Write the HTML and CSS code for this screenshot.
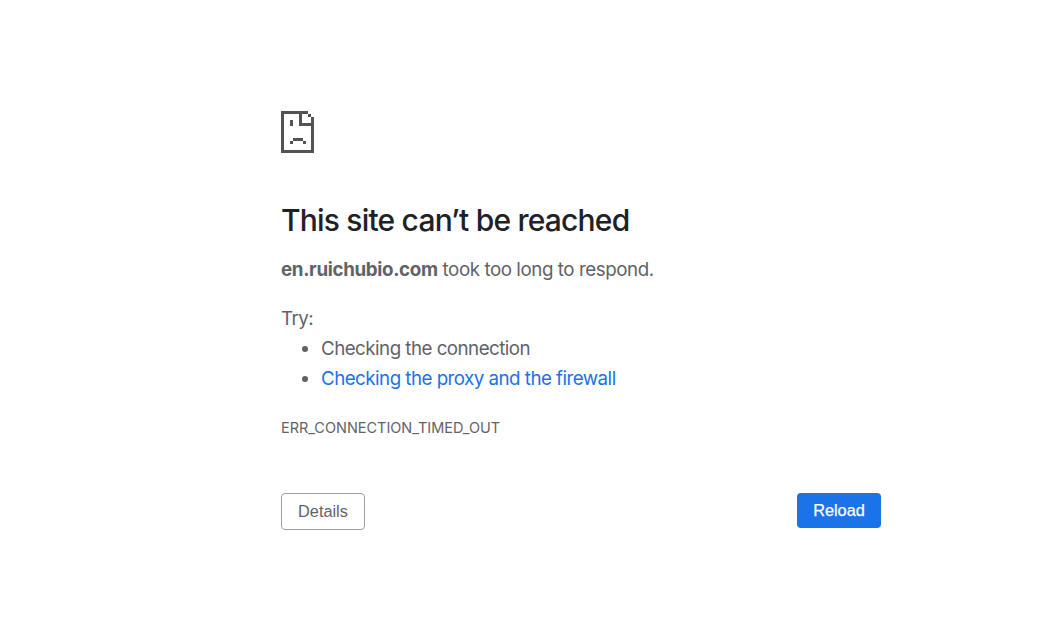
FILE: index.html
```html
<!DOCTYPE html>
<html lang="en">
<head>
  <meta charset="UTF-8" />
  <meta name="viewport" content="width=device-width, initial-scale=1.0"/>
  <title>en.ruichubio.com</title>
  <link rel="stylesheet" href="styles.css">
</head>
<body>
  <div class="container">
    <!-- Sad page icon -->
    <svg class="icon" viewBox="0 0 33 42" shape-rendering="crispEdges" aria-hidden="true">
      <path d="M0 0H27V3H3V39H30V15H18V3H21V12H33V42H0Z M27 3H30V6H27Z M30 6H33V12H30Z M9 9H12V15H9Z M12 27H22V30H12Z M9 30H12V33H9Z M22 30H25V33H22Z"/>
    </svg>

    <h1>This site can’t be reached</h1>
    <p class="summary"><strong>en.ruichubio.com</strong> took too long to respond.</p>

    <div class="suggestions">
      <p>Try:</p>
      <ul>
        <li>Checking the connection</li>
        <li><a href="#buttons">Checking the proxy and the firewall</a></li>
      </ul>
    </div>

    <div class="error-code">ERR_CONNECTION_TIMED_OUT</div>

    <div class="buttons" id="buttons">
      <button class="details-btn">Details</button>
      <button class="reload-btn">Reload</button>
    </div>
  </div>
</body>
</html>
```

FILE: styles.css
```css
body {
  margin: 0;
  font-family: Inter, sans-serif;
  font-size: 18.75px;
  line-height: 30px;
  letter-spacing: -0.53px;
  color: #5f6368;
  background: #fff;
}

.container {
  width: 600px;
  margin-left: 281px;
  padding-top: 111px;
}

.icon {
  display: block;
  width: 33px;
  height: 42px;
  fill: #535353;
}

h1 {
  margin: 49px 0 16px;
  font-size: 30px;
  font-weight: 500;
  line-height: 37px;
  letter-spacing: -0.8px;
  color: #202124;
}

p {
  margin: 0;
}

.summary {
  margin-bottom: 19px;
  letter-spacing: -0.44px;
}

.summary strong {
  letter-spacing: -0.34px;
}

ul {
  margin: 0;
  padding-left: 40px;
}

a {
  color: #1a73e8;
  text-decoration: none;
}

.error-code {
  margin-top: 19px;
  font-size: 14.5px;
  letter-spacing: -0.02px;
}

.buttons {
  display: flex;
  justify-content: space-between;
  align-items: flex-start;
  margin-top: 50px;
}

button {
  width: 84px;
  border-radius: 4px;
  padding: 0;
  font-family: "Liberation Sans", Arial, sans-serif;
  font-size: 16.3px;
  cursor: pointer;
}

.details-btn {
  height: 37px;
  border: 1px solid #9aa0a6;
  background: #fff;
  color: #5f6368;
}

.reload-btn {
  height: 35px;
  border: none;
  background: #1a73e8;
  color: #fff;
  -webkit-text-stroke: 0.25px #fff;
}
```
